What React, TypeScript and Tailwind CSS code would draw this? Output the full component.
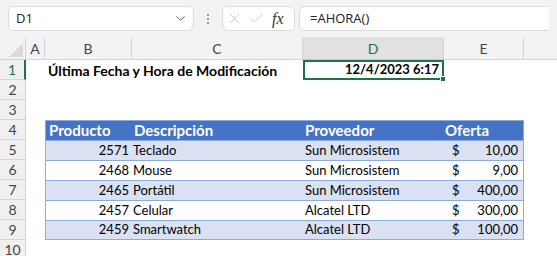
import { ChevronDown, X, Check } from 'lucide-react'

const cols = [
  { id: 'A', w: 'w-[19px]' },
  { id: 'B', w: 'w-[87px]' },
  { id: 'C', w: 'w-[171px]' },
  { id: 'D', w: 'w-[141px]' },
  { id: 'E', w: 'w-[80px]' },
]

const products = [
  { id: 2571, name: 'Teclado', vendor: 'Sun Microsistem', price: '10,00' },
  { id: 2468, name: 'Mouse', vendor: 'Sun Microsistem', price: '9,00' },
  { id: 2465, name: 'Portátil', vendor: 'Sun Microsistem', price: '400,00' },
  { id: 2457, name: 'Celular', vendor: 'Alcatel LTD', price: '300,00' },
  { id: 2459, name: 'Smartwatch', vendor: 'Alcatel LTD', price: '100,00' },
]

const cellFont = "font-['Lato',_sans-serif] text-[13px] text-black"

function RowHead({ n, active }: { n: number; active?: boolean }) {
  return (
    <div
      className={`w-[26px] shrink-0 h-full flex items-center justify-center bg-[#f0f0f0] border-b border-[#d4d4d4] text-[14px] font-['Lato',_sans-serif] ${
        active ? 'text-[#217346] border-r-2 border-r-[#217346] bg-[#e1e1e1]' : 'text-[#444] border-r border-r-[#d4d4d4]'
      }`}
    >
      {n}
    </div>
  )
}

function Toolbar() {
  return (
    <div className="h-[37px] flex items-center px-2 gap-1 bg-[#f3f3f3]">
      <div className="w-[186px] h-[25px] bg-white border border-[#dcdcdc] rounded-[5px] flex items-center justify-between pl-[7px] pr-[5px] font-['Open_Sans',_sans-serif] text-[13px] text-[#222]">
        <span>D1</span>
        <ChevronDown size={15} strokeWidth={1.5} className="text-[#555]" />
      </div>
      <div className="w-[20px] flex flex-col items-center gap-[2px]">
        <span className="w-[2px] h-[2px] bg-[#999]" />
        <span className="w-[2px] h-[2px] bg-[#999]" />
        <span className="w-[2px] h-[2px] bg-[#999]" />
      </div>
      <div className="w-[73px] h-[25px] bg-white border border-[#dcdcdc] rounded-[5px] flex items-center gap-[5px] pl-[3px]">
        <X size={17} strokeWidth={1} className="text-[#b8b8b8]" />
        <Check size={17} strokeWidth={1} className="text-[#b8b8b8]" />
        <span className="font-['Liberation_Serif',_serif] italic text-[16px] text-[#333] leading-none ml-[2px]">fx</span>
      </div>
      <div className="flex-1 h-[25px] bg-white border border-[#dcdcdc] rounded-l-[5px] border-r-0 flex items-center pl-[10px] font-['Open_Sans',_sans-serif] text-[13px] text-[#222]">
        =AHORA()
      </div>
    </div>
  )
}

function ColumnHeads() {
  return (
    <div className="h-[23px] flex bg-[#f3f3f3]">
      <div className="w-[26px] shrink-0 border-r border-b border-[#d4d4d4] relative">
        <svg className="absolute right-[2px] bottom-[2px]" width="14" height="14" viewBox="0 0 14 14">
          <polygon points="14,0 14,14 0,14" fill="#d9d9d9" />
        </svg>
      </div>
      {cols.map((c) => (
        <div
          key={c.id}
          className={`${c.w} shrink-0 flex items-center justify-center border-r border-[#d4d4d4] text-[14px] font-['Lato',_sans-serif] ${
            c.id === 'D' ? 'bg-[#e1e1e1] text-[#217346] border-b border-b-[#c6c6c6]' : 'text-[#444] border-b border-b-[#d4d4d4]'
          }`}
        >
          {c.id}
        </div>
      ))}
      <div className="flex-1 border-b border-[#d4d4d4]" />
    </div>
  )
}

export default function App() {
  return (
    <div className="w-[557px] h-[256px] overflow-hidden bg-white">
      <Toolbar />
      <ColumnHeads />

      {/* row 1 */}
      <div className={`h-[20px] flex ${cellFont}`}>
        <RowHead n={1} active />
        <div className="w-[19px] shrink-0" />
        <div className="w-[258px] shrink-0 flex items-center pl-[3px] font-bold text-[14px]">Última Fecha y Hora de Modificación</div>
        <div className="w-[141px] shrink-0 relative flex items-center justify-end pr-[3px] font-bold text-[13px] border-2 border-[#217346]">
          12/4/2023 6:17
          <span className="absolute right-[-4px] bottom-[-4px] w-[6px] h-[6px] bg-[#217346] border border-white" />
        </div>
      </div>

      <div className="h-[20px] flex"><RowHead n={2} /></div>
      <div className="h-[20px] flex"><RowHead n={3} /></div>

      {/* row 4: table header */}
      <div className={`h-[20px] flex ${cellFont}`}>
        <RowHead n={4} />
        <div className="w-[19px] shrink-0" />
        <div className="w-[479px] shrink-0 flex items-center bg-[#4472c4] text-white font-bold text-[15px] border-x border-t border-[#8ea9db]">
          <div className="w-[86px] pl-[3px]">Producto</div>
          <div className="w-[171px] pl-[2px]">Descripción</div>
          <div className="w-[141px] pl-[2px]">Proveedor</div>
          <div className="flex-1 pl-[1px]">Oferta</div>
        </div>
      </div>

      {products.map((p, i) => (
        <div key={p.id} className={`h-[20px] flex ${cellFont}`}>
          <RowHead n={5 + i} />
          <div className="w-[19px] shrink-0" />
          <div
            className={`w-[479px] shrink-0 flex items-center border-x border-t border-[#8ea9db] ${
              i === products.length - 1 ? 'border-b' : ''
            } ${i % 2 === 0 ? 'bg-[#d9e1f2]' : 'bg-white'}`}
          >
            <div className="w-[86px] text-right pr-[3px]">{p.id}</div>
            <div className="w-[171px] pl-[1px]">{p.name}</div>
            <div className="w-[141px] pl-[2px]">{p.vendor}</div>
            <div className="flex-1 flex justify-between pl-[8px] pr-[5px]">
              <span>$</span>
              <span>{p.price}</span>
            </div>
          </div>
        </div>
      ))}

      <div className="h-[20px] flex"><RowHead n={10} /></div>
    </div>
  )
}
